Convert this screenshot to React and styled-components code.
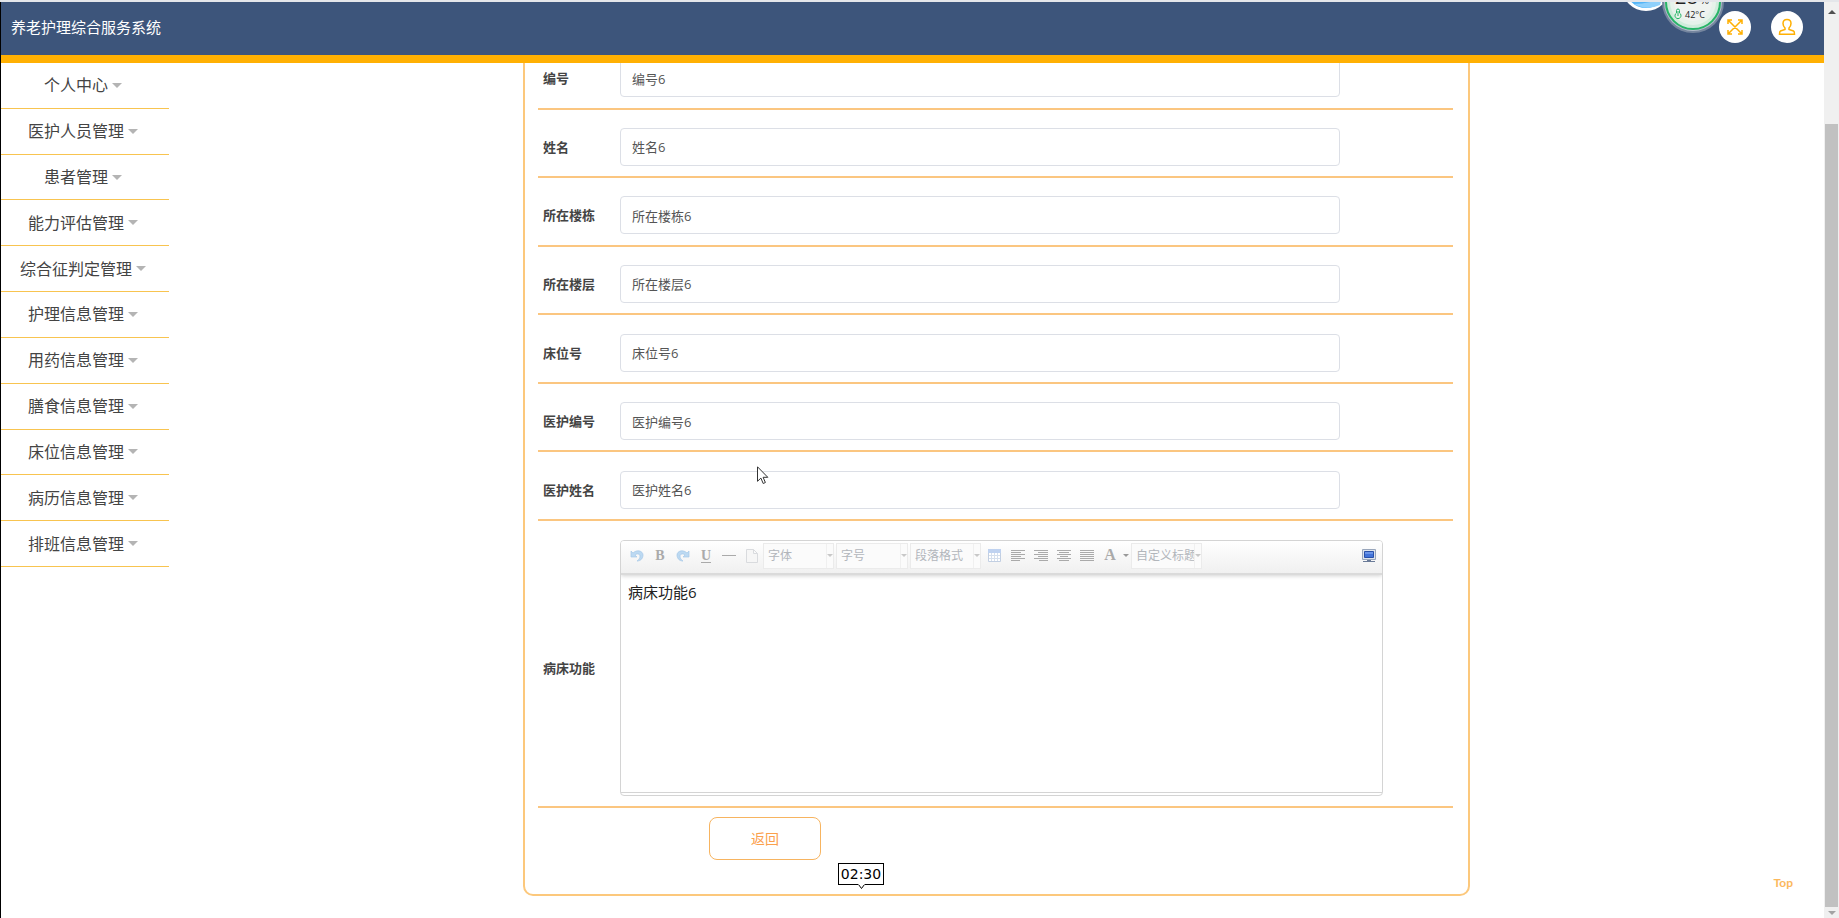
import React from "react";
import styled, { createGlobalStyle } from "styled-components";

const GlobalStyle = createGlobalStyle`
  * { box-sizing: border-box; }
  body {
    margin: 0;
    background: #fff;
    font-family: "Open Sans", "Noto Sans CJK SC", sans-serif;
    overflow: hidden;
  }
  button, input, select, textarea { font-family: inherit; }
`;

const Window = styled.div`
  display: flex;
  height: 100vh;
  overflow: hidden;
  border-top: 2px solid #e4e6ea;
`;

const Page = styled.div`
  flex: 1;
  min-width: 0;
  display: flex;
  flex-direction: column;
  border-left: 1px solid #000;
  position: relative;
`;

const Header = styled.header`
  flex: none;
  height: 61px;
  display: flex;
  align-items: center;
  padding: 0 21px 3px 10px;
  background: #3d557b;
  border-bottom: 8px solid #ffb003;
  position: relative;
  z-index: 2;
`;

const Title = styled.h1`
  margin: 0;
  flex: 1;
  font-size: 15px;
  line-height: 20px;
  font-weight: 400;
  color: #fff;
`;

const RoundButton = styled.button`
  width: 32px;
  height: 32px;
  margin-left: 20px;
  padding: 0;
  display: grid;
  place-items: center;
  border: 0;
  border-radius: 50%;
  background: #fff;
  color: #ffb003;
`;

const MonitorWidget = styled.svg`
  position: absolute;
  top: 0;
  right: 98px;
`;

const Body = styled.div`
  flex: 1;
  min-height: 0;
  display: flex;
`;

const Sidebar = styled.nav`
  flex: none;
  width: 168px;
`;

const Menu = styled.ul`
  margin: 0;
  padding: 0;
  list-style: none;
  height: 504px;
  display: grid;
  grid-auto-rows: 1fr;
`;

const MenuItem = styled.li`
  display: flex;
  border-bottom: 1px solid #f8c450;
`;

const MenuButton = styled.button`
  flex: 1;
  display: flex;
  align-items: center;
  justify-content: center;
  gap: 4px;
  padding: 0 4px 0 0;
  border: 0;
  background: none;
  font-size: 16px;
  line-height: 20px;
  color: #444;
`;

const Caret = styled.span`
  border: ${(p) => p.$size}px solid transparent;
  ${(p) =>
    p.$up
      ? `border-bottom-color: ${p.$color}; border-top: 0;`
      : `border-top-color: ${p.$color}; border-bottom: 0;`}
`;

const Main = styled.main`
  flex: 1;
  min-width: 0;
  display: grid;
  grid-template-columns: 354fr 947fr 354fr;
  align-items: start;
`;

const Card = styled.form`
  grid-column: 2;
  margin-top: -38px;
  padding: 14px 15px 34px 13px;
  border: 2px solid #fcc87c;
  border-radius: 10px;
`;

const Fields = styled.div`
  height: 480px;
  display: grid;
  grid-auto-rows: 1fr;
`;

const Row = styled.div`
  display: grid;
  grid-template-columns: 82px 1fr ${(p) => (p.$wide ? 70 : 113)}px;
  align-items: center;
  padding: ${(p) => (p.$wide ? 19 : 18)}px 0 10px;
  border-bottom: 2px solid #fbc680;
`;

const Label = styled.label`
  padding-left: 5px;
  font-size: 13px;
  line-height: 20px;
  font-weight: 700;
  color: #444;
`;

const TextBox = styled.input`
  width: 100%;
  height: 38px;
  padding: 0 11px;
  border: 1px solid #dcdfe6;
  border-radius: 4px;
  background: #fff;
  font-size: 13px;
  color: #555;
  outline: 0;
`;

const Editor = styled.div`
  height: 256px;
  display: flex;
  flex-direction: column;
  border: 1px solid #d4d4d4;
  border-radius: 4px;
  overflow: hidden;
`;

const Toolbar = styled.div`
  flex: none;
  height: 34px;
  display: flex;
  align-items: center;
  padding: 0 2px 3px 4px;
  background: linear-gradient(#fff, #f0f0f0);
  border-bottom: 2px solid #dadada;
  box-shadow: 0 1px 4px rgba(0, 0, 0, 0.18);
  z-index: 1;
`;

const Tool = styled.button`
  flex: none;
  width: ${(p) => (p.$narrow ? 10 : 23)}px;
  height: 24px;
  padding: 0;
  display: grid;
  place-items: center;
  border: 0;
  background: none;
  color: #aaa;
`;

const Combo = styled.div`
  flex: none;
  display: flex;
  align-items: center;
  width: ${(p) => p.$width}px;
  height: 26px;
  margin-right: 2px;
  border: 1px solid #ebebeb;
  background: #fbfbfb;
`;

const Picker = styled.select`
  flex: 1;
  min-width: 0;
  height: 24px;
  padding: 0 0 0 4px;
  appearance: none;
  border: 0;
  border-right: 1px solid #f0f0f0;
  background: none;
  font-size: 12px;
  color: #b2b6bb;
`;

const Spacer = styled.span`
  flex: 1;
`;

const EditorText = styled.textarea`
  flex: 1;
  padding: 6px 7px;
  border: 0;
  outline: 0;
  resize: none;
  font-size: 15px;
  line-height: 22px;
  color: #222;
`;

const StatusBar = styled.div`
  flex: none;
  height: 3px;
  border-top: 1px solid #d4d4d4;
`;

const Actions = styled.div`
  padding: 9px 0 0 171px;
`;

const BackButton = styled.button`
  width: 112px;
  height: 43px;
  padding: 0 6px 2px;
  border: 1px solid #f7b460;
  border-radius: 8px;
  background: #fff;
  font-size: 14px;
  color: #fba04c;
`;

const TopLink = styled.a`
  position: absolute;
  right: 31px;
  bottom: 26px;
  font-family: Lato, sans-serif;
  font-size: 12px;
  line-height: 18px;
  font-weight: 700;
  color: #fbb85c;
  text-decoration: none;
`;

const TimeTip = styled.div`
  position: absolute;
  left: 837px;
  top: 861px;
  width: 46px;
  height: 22px;
  border: 1px solid #000;
  background: #fff;
  font-family: "DejaVu Sans", sans-serif;
  font-size: 14px;
  line-height: 20px;
  text-align: center;
  color: #000;
`;

const TipArrow = styled.svg`
  position: absolute;
  left: 19px;
  top: 20px;
`;

const Pointer = styled.svg`
  position: absolute;
  left: 756px;
  top: 464px;
`;

const ScrollBar = styled.div`
  flex: none;
  width: 15px;
  display: flex;
  flex-direction: column;
  align-items: center;
  background: #f0f0f0;
`;

const ScrollArrow = styled.button`
  width: 15px;
  height: ${(p) => (p.$down ? 11 : 20)}px;
  padding: 0;
  display: grid;
  place-items: center;
  border: 0;
  background: none;
`;

const ScrollTrack = styled.div`
  flex: 1;
  width: 13px;
  padding-top: 102px;
  display: flex;
`;

const ScrollThumb = styled.div`
  flex: 1;
  background: #c1c1c1;
`;

const menu = [
  "个人中心", "医护人员管理", "患者管理", "能力评估管理", "综合征判定管理", "护理信息管理",
  "用药信息管理", "膳食信息管理", "床位信息管理", "病历信息管理", "排班信息管理",
];

const fields = ["编号", "姓名", "所在楼栋", "所在楼层", "床位号", "医护编号", "医护姓名"];

const UndoIcon = ({ flip }) => (
  <svg width="14" height="14" viewBox="0 0 14 14">
    <path
      transform={flip ? "matrix(-1 0 0 1 14 0)" : undefined}
      d="M1 2v6h6L5 6c2-2 5-1 5 1 0 2-1 4-3 5 4 0 6-3 6-6 0-4-6-6-10-2z"
      fill="#bcd9f2"
      stroke="#a6c8e8"
      strokeWidth=".7"
    />
  </svg>
);

const LetterIcon = ({ letter, underline, size = 14 }) => (
  <svg width="16" height="17" viewBox="0 0 16 17">
    <text x="8" y="13" textAnchor="middle" fontFamily="Liberation Serif, serif" fontSize={size} fontWeight="700" fill="#aaa">
      {letter}
    </text>
    {underline && <path d="M3 15.5h10" stroke="#aaa" />}
  </svg>
);

const LinesIcon = ({ widths, align }) => (
  <svg width="14" height="13" viewBox="0 0 14 13">
    {widths.map((w, i) => {
      const x = align === "right" ? 14 - w : align === "center" ? (14 - w) / 2 : 0;
      return <path key={i} d={`M${x} ${i * 2 + 1.5}h${w}`} stroke="#aaa" />;
    })}
  </svg>
);

const PageIcon = () => (
  <svg width="12" height="14" viewBox="0 0 12 14">
    <path d="M.5 .5h7l4 4v9H.5zM7.5 .5v4h4" fill="#f6f6f6" stroke="#d9dbde" />
  </svg>
);

const TableIcon = () => (
  <svg width="13" height="13" viewBox="0 0 13 13">
    <path d="M.5 .5h12v12H.5z" fill="#fff" stroke="#c2cfe2" />
    <path d="M0 0h13v4H0z" fill="#bfd2f0" />
    <path d="M1 6.5h11M1 9.5h11M3.5 4v8M6.5 4v8M9.5 4v8" stroke="#d5dfed" />
  </svg>
);

const ScreenIcon = () => (
  <svg width="14" height="14" viewBox="0 0 14 14">
    <path d="M.5 .5h13v10H.5z" fill="#dfe4ec" stroke="#99a6bb" />
    <path d="M2.5 2.5h9v6h-9z" fill="#4273d9" stroke="#2850a8" />
    <path d="M3 3h8v2H3z" fill="#6a94e8" />
    <path d="M5 11h4v1h4v1H1v-1h4z" fill="#6a7b98" />
  </svg>
);

function FormatCombo({ name, width }) {
  return (
    <Combo $width={width}>
      <Picker aria-label={name}>
        <option>{name}</option>
      </Picker>
      <Caret $size={3} $color="#c8c8c8" />
    </Combo>
  );
}

function EditorToolbar() {
  return (
    <Toolbar>
      <Tool type="button" aria-label="撤销"><UndoIcon /></Tool>
      <Tool type="button" aria-label="加粗"><LetterIcon letter="B" /></Tool>
      <Tool type="button" aria-label="重做"><UndoIcon flip /></Tool>
      <Tool type="button" aria-label="下划线"><LetterIcon letter="U" underline /></Tool>
      <Tool type="button" aria-label="分隔线">
        <svg width="14" height="14" viewBox="0 0 14 14"><path d="M0 6.5h14" stroke="#aaa" /></svg>
      </Tool>
      <Tool type="button" aria-label="新页"><PageIcon /></Tool>
      <FormatCombo name="字体" width={71} />
      <FormatCombo name="字号" width={72} />
      <FormatCombo name="段落格式" width={71} />
      <Tool type="button" aria-label="表格"><TableIcon /></Tool>
      <Tool type="button" aria-label="左对齐"><LinesIcon widths={[14, 10, 14, 10, 14, 9]} /></Tool>
      <Tool type="button" aria-label="右对齐"><LinesIcon align="right" widths={[14, 10, 14, 10, 14, 9]} /></Tool>
      <Tool type="button" aria-label="居中"><LinesIcon align="center" widths={[14, 10, 14, 8, 14, 10]} /></Tool>
      <Tool type="button" aria-label="两端对齐"><LinesIcon widths={[14, 14, 14, 14, 14, 14]} /></Tool>
      <Tool type="button" aria-label="字体颜色"><LetterIcon letter="A" size={16} /></Tool>
      <Tool type="button" aria-label="选择颜色" $narrow><Caret $size={3} $color="#999" /></Tool>
      <FormatCombo name="自定义标题" width={71} />
      <Spacer />
      <Tool type="button" aria-label="全屏"><ScreenIcon /></Tool>
    </Toolbar>
  );
}

export default function App() {
  return (
    <Window>
      <GlobalStyle />
      <Page>
        <Header>
          <Title>养老护理综合服务系统</Title>
          <MonitorWidget width="104" height="34" viewBox="0 0 104 34">
            <circle cx="24" cy="-15" r="24" fill="#fff" />
            <circle cx="24" cy="-15" r="21" fill="#55b5f7" />
            <path d="M12 2Q26 2 40-4L38 3Q25 9 12 2z" fill="#8fd0fb" />
            <circle cx="71" cy="0" r="31" fill="#76869f" />
            <circle cx="71" cy="0" r="29" fill="#b4bfcc" />
            <circle cx="71" cy="0" r="27" fill="#cfecdb" stroke="#27b567" strokeWidth="2" />
            <circle cx="71" cy="0" r="23" fill="#e6f2ea" />
            <circle cx="71" cy="0" r="19" fill="#eff3f0" />
            <text x="53" y="2" fontFamily="Open Sans, sans-serif" fontSize="20" fill="#222">28</text>
            <text x="78" y="2" fontFamily="Open Sans, sans-serif" fontSize="11" fill="#222">%</text>
            <path d="M54.5 11V8.5a1.5 1.5 0 0 1 3 0V11a3 3 0 1 1-3 0z" fill="none" stroke="#27b567" />
            <path d="M56 9v5" stroke="#27b567" />
            <text x="63" y="16" fontFamily="Open Sans, sans-serif" fontSize="9" fill="#222">42°C</text>
          </MonitorWidget>
          <RoundButton aria-label="全屏">
            <svg width="18" height="18" viewBox="0 0 18 18" fill="none" stroke="currentColor" strokeWidth="1.5">
              <path d="M2 2l14 14M16 2L2 16M2 6V2h4M12 2h4v4M16 12v4h-4M6 16H2v-4" />
            </svg>
          </RoundButton>
          <RoundButton aria-label="用户">
            <svg width="18" height="18" viewBox="0 0 18 18" fill="none" stroke="currentColor" strokeWidth="1.5">
              <path d="M9 1.5c-3 0-4 2-4 4 0 2 1 3.500 2 4.500v1.500L2.500 13C1.500 13.500 1.500 15 1.500 16.200h15c0-1.200 0-2.700-1-3.200L11 11.500V10c1-1 2-2.500 2-4.500 0-2-1-4-4-4z" />
            </svg>
          </RoundButton>
        </Header>
        <Body>
          <Sidebar>
            <Menu>
              {menu.map((name) => (
                <MenuItem key={name}>
                  <MenuButton>
                    {name}
                    <Caret $size={5} $color="#b4b4b4" />
                  </MenuButton>
                </MenuItem>
              ))}
            </Menu>
          </Sidebar>
          <Main>
            <Card onSubmit={(e) => e.preventDefault()}>
              <Fields>
                {fields.map((name, i) => (
                  <Row key={name}>
                    <Label htmlFor={`field-${i}`}>{name}</Label>
                    <TextBox id={`field-${i}`} defaultValue={`${name}6`} readOnly />
                  </Row>
                ))}
              </Fields>
              <Row $wide>
                <Label htmlFor="bed-use">病床功能</Label>
                <Editor>
                  <EditorToolbar />
                  <EditorText id="bed-use" defaultValue="病床功能6" readOnly />
                  <StatusBar />
                </Editor>
              </Row>
              <Actions>
                <BackButton type="button">返回</BackButton>
              </Actions>
            </Card>
          </Main>
        </Body>
        <TopLink href="#top">Top</TopLink>
        <TimeTip>
          02:30
          <TipArrow width="7" height="6" viewBox="0 0 7 6">
            <path d="M0 0h7v1L3.5 5 0 1z" fill="#fff" />
            <path d="M.5 .5l3 4 3-4" fill="none" stroke="#000" />
          </TipArrow>
        </TimeTip>
        <Pointer width="12" height="19" viewBox="0 0 12 19">
          <path d="M.5 .8v14.500l3.400-3.200 2.300 5.400 2.200-1-2.300-5.200h4.700z" fill="#fff" stroke="#333" />
        </Pointer>
      </Page>
      <ScrollBar>
        <ScrollArrow aria-label="向上滚动"><Caret $up $size={4} $color="#505050" /></ScrollArrow>
        <ScrollTrack><ScrollThumb /></ScrollTrack>
        <ScrollArrow aria-label="向下滚动" $down><Caret $size={4} $color="#a3a3a3" /></ScrollArrow>
      </ScrollBar>
    </Window>
  );
}
